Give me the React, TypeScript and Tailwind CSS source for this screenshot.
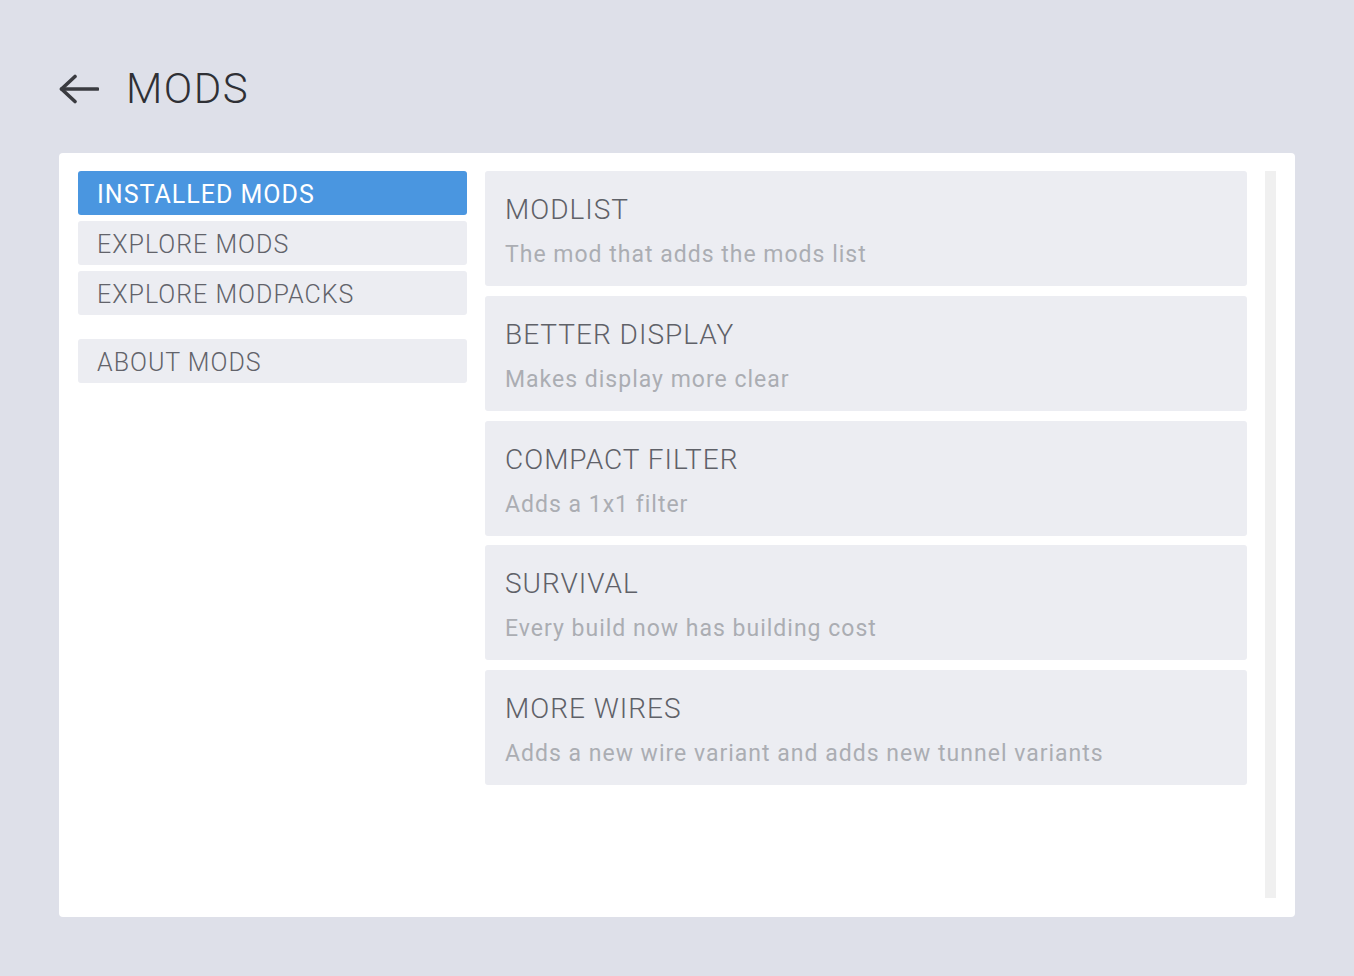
const mods = [
  { title: 'MODLIST', desc: 'The mod that adds the mods list' },
  { title: 'BETTER DISPLAY', desc: 'Makes display more clear' },
  { title: 'COMPACT FILTER', desc: 'Adds a 1x1 filter' },
  { title: 'SURVIVAL', desc: 'Every build now has building cost' },
  { title: 'MORE WIRES', desc: 'Adds a new wire variant and adds new tunnel variants' },
];

const tabs = ['INSTALLED MODS', 'EXPLORE MODS', 'EXPLORE MODPACKS'];

function BackArrow() {
  return (
    <svg width="40" height="30" viewBox="0 0 40 30" fill="none" className="shrink-0">
      <path d="M2.5 15H38.5" stroke="#3a3b40" strokeWidth="3.6" strokeLinecap="round" />
      <path d="M16 2.5L2.5 15L16 27.5" stroke="#3a3b40" strokeWidth="3.6" strokeLinecap="round" strokeLinejoin="round" />
    </svg>
  );
}

export default function App() {
  return (
    <div
      className="min-h-[976px] w-full bg-[#dee0e9] px-[59px] pt-[44px] pb-[59px]"
      style={{ fontFamily: 'Roboto, "Liberation Sans", sans-serif' }}
    >
      {/* Header */}
      <div className="flex h-[90px] items-center gap-[27px] mb-[19px]">
        <BackArrow />
        <h1 className="text-[42px] leading-none font-light tracking-[1.5px] text-[#2f3035]">MODS</h1>
      </div>

      {/* Panel */}
      <div className="flex h-[764px] gap-[18px] rounded-[4px] bg-white px-[19px] pt-[18px] pb-[19px]">
        {/* Sidebar */}
        <div className="flex w-[389px] shrink-0 flex-col">
          {tabs.map((tab, i) => (
            <div
              key={tab}
              className={`mb-[6px] flex h-[44px] items-center rounded-[3px] px-[19px] pt-[4px] text-[25px] tracking-[1px] ${
                i === 0 ? 'bg-[#4a96e0] text-white' : 'bg-[#ecedf2] font-light text-[#62636a]'
              }`}
            >
              {tab}
            </div>
          ))}
          <div className="mt-[18px] flex h-[44px] items-center rounded-[3px] bg-[#ecedf2] px-[19px] pt-[4px] text-[25px] font-light tracking-[1px] text-[#62636a]">
            ABOUT MODS
          </div>
        </div>

        {/* Mod list */}
        <div className="flex flex-1 flex-col gap-[9.75px]">
          {mods.map((mod) => (
            <div
              key={mod.title}
              className="h-[115px] rounded-[3px] bg-[#ecedf2] px-[20px] pt-[23px]"
            >
              <div className="text-[28px] leading-[32px] font-light tracking-[1px] text-[#5f6168]">{mod.title}</div>
              <div className="mt-[15px] text-[23px] leading-[28px] tracking-[1px] text-[#abadb3]">{mod.desc}</div>
            </div>
          ))}
        </div>

        {/* Scrollbar track */}
        <div className="w-[11px] shrink-0 bg-[#f0f0f0]" />
      </div>
    </div>
  );
}
